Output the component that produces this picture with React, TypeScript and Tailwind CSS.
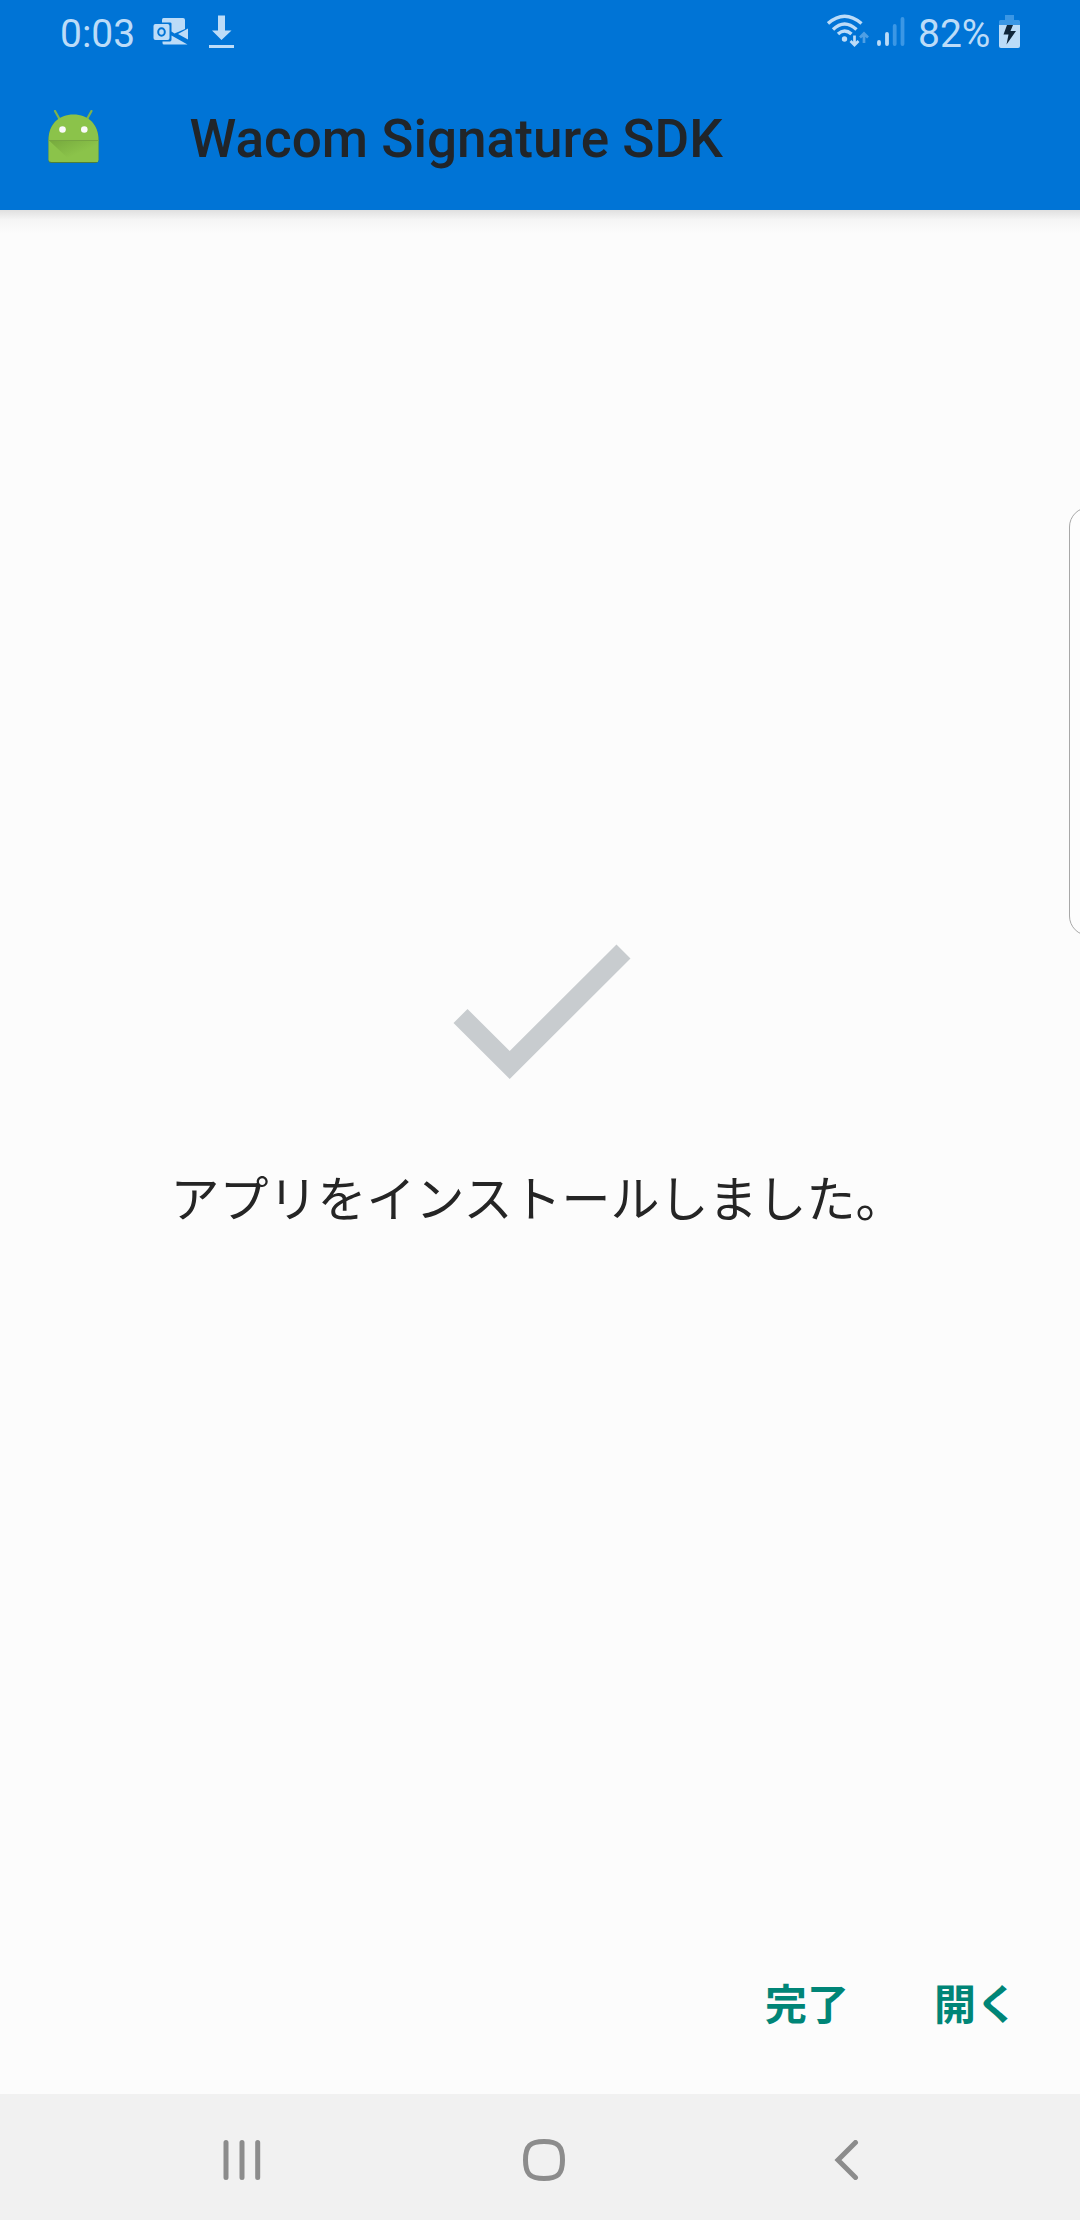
function MailIcon() {
  return (
    <svg width="36" height="28" viewBox="0 0 36 28" fill="#bcdcf8">
      <path d="M10.500 0H30Q32 0 32 2V11L21.500 15.500L18.500 13.500V5.500Q18.500 4.500 17 4.500H9V2Q9 0 10.500 0Z" />
      <path d="M35 10.500V21.500L25 16Z" />
      <path d="M9.500 23.500H17Q18.500 23.500 18.500 21.500V17.500L34.500 26.500H11Q9.500 26.500 9.500 25Z" />
      <rect x="0.500" y="6" width="16" height="16" rx="2" />
      <ellipse cx="8.500" cy="14" rx="3.300" ry="3.800" fill="none" stroke="#0074d6" strokeWidth="2" />
    </svg>
  );
}

function DownloadIcon() {
  return (
    <svg width="25" height="34" viewBox="0 0 25 34" fill="#bcdcf8">
      <path d="M9 0.500H16V15.500H22.500L12.500 25L3 15.500H9Z" />
      <rect y="30" width="25" height="3" />
    </svg>
  );
}

function WifiIcon() {
  return (
    <svg width="43" height="34" viewBox="0 0 43 34" fill="none" stroke="#bcdcf8" strokeWidth="3.400">
      <path d="M1 9.500Q17.500 -5 34.500 9.500" />
      <path d="M6 15.500Q17.500 4.500 29.500 15.500" />
      <path d="M11 20Q17.500 14 24.500 20" />
      <circle cx="17.500" cy="25" r="2.700" fill="#bcdcf8" stroke="none" />
      <path d="M27.500 21.500V31M23.500 27L27.500 31L31.500 27" strokeWidth="2.700" />
      <path d="M37 29V19.500M33 23.500L37 19.500L41 23.500" stroke="#4f9fe4" strokeWidth="2.700" />
    </svg>
  );
}

function SignalIcon() {
  return (
    <svg width="28" height="31" viewBox="0 0 28 31" strokeWidth="3.800" strokeLinecap="round">
      <path d="M2 26V28M10 18V28" stroke="#bcdcf8" />
      <path d="M17.700 10V28M25.500 3V28" stroke="#3b97e5" />
    </svg>
  );
}

function BatteryIcon() {
  return (
    <svg width="21" height="33" viewBox="0 0 21 33">
      <path d="M6 0H15V5H19.500Q21 5 21 6.500V11H0V6.500Q0 5 1.500 5H6Z" fill="#3b97e5" />
      <path d="M0 10H21V31Q21 33 19 33H2Q0 33 0 31Z" fill="#bcdcf8" />
      <path d="M8 10H14L11.500 16H17L7.500 29.500L9.500 19.500H4.500Z" fill="#10263b" />
    </svg>
  );
}

function RobotIcon() {
  return (
    <svg width="54" height="54" viewBox="0 0 54 54">
      <defs>
        <linearGradient id="robotShade" x1="0" y1="0" x2="1" y2="1">
          <stop offset="0" stopColor="#76a93d" />
          <stop offset="0.600" stopColor="#8bc34a" />
        </linearGradient>
      </defs>
      <path d="M8 1L13 10M44.500 1L39.500 10" stroke="#7fb34a" strokeWidth="2.200" strokeLinecap="round" />
      <path d="M1.500 50.500V30C1.500 14 12 5 26.500 5S51.500 14 51.500 30V50Q51.500 53 48.500 53H4.500Q1.500 53 1.500 50.500Z" fill="#4b7f3d" />
      <path d="M1.500 49.500V30C1.500 14 12 4.500 26.500 4.500S51.500 14 51.500 30V49.500Q51.500 52 48.500 52H4.500Q1.500 52 1.500 49.500Z" fill="#8bc34a" />
      <path d="M2 30.500H50L51 52H25Z" fill="url(#robotShade)" />
      <path d="M1.500 30.500H51.500" stroke="#76a541" />
      <circle cx="15.500" cy="19.500" r="3.300" fill="#fafafa" />
      <circle cx="37.300" cy="19.500" r="3.300" fill="#fafafa" />
    </svg>
  );
}

function StatusBar() {
  return (
    <div className="flex h-[66px] items-start pl-[60px] pr-[60px] text-[39px] leading-[46px] text-[#bcdcf8]">
      <span className="mt-[11px] w-[93px]">0:03</span>
      <div className="mt-[18px] w-[56px]"><MailIcon /></div>
      <div className="mt-[15px]"><DownloadIcon /></div>
      <div className="ml-auto mt-[14px]"><WifiIcon /></div>
      <div className="ml-[7px] mt-[16px]"><SignalIcon /></div>
      <span className="ml-[13px] mt-[11px] w-[81px] whitespace-nowrap">82%</span>
      <div className="mt-[15px]"><BatteryIcon /></div>
    </div>
  );
}

export default function App() {
  return (
    <div className="relative flex h-[2220px] w-[1080px] flex-col overflow-hidden bg-[#fcfcfc] font-['Roboto','Noto_Sans_CJK_JP',sans-serif]">
      <header className="h-[210px] shrink-0 bg-[#0074d6]">
        <StatusBar />
        <div className="flex h-[144px] items-start pl-[47px]">
          <div className="mt-[44px]"><RobotIcon /></div>
          <h1 className="ml-[88.500px] mt-[42px] whitespace-nowrap text-[53.100px] font-medium leading-[62px] text-[#212529]">Wacom Signature SDK</h1>
        </div>
      </header>
      <div className="h-[24px] shrink-0 bg-linear-to-b from-[#e0e0e0] via-[#f5f5f5] via-40% to-[#fcfcfc]" />

      <main className="flex flex-1 flex-col items-center pt-[710px]">
        <svg className="ml-[4px]" width="178" height="136" viewBox="0 0 178 136">
          <path d="M0.500 79L14.500 65L56.700 107L163.500 0.500L177.500 14.500L56.700 135Z" fill="#c8cccf" />
        </svg>
        <p className="mr-[5px] mt-[85px] whitespace-nowrap text-[49px] leading-[72px] text-[#252525]">アプリをインストールしました。</p>
        <div className="mb-[58px] mt-auto flex self-end pr-[62px] text-[42px] font-bold leading-[60px] text-[#008577]">
          <button className="mr-[85px]">完了</button>
          <button>開く</button>
        </div>
      </main>

      <div className="absolute left-[1069px] top-[507px] h-[429px] w-[40px] rounded-[20px] border border-[#a8a8a8] bg-[#fdfdfd]" />

      <nav className="flex h-[126px] shrink-0 items-center bg-[#f1f1f1] pl-[223px] pt-[6px]">
        <svg width="38" height="40" viewBox="0 0 38 40" stroke="#8c8c8c" strokeWidth="5" strokeLinecap="round">
          <path d="M3 2.500V37.500M19 2.500V37.500M34.700 2.500V37.500" />
        </svg>
        <svg className="ml-[262px]" width="42" height="42" viewBox="0 0 42 42" fill="none" stroke="#8c8c8c" strokeWidth="5">
          <path d="M21 2.500C35 2.500 39.500 7 39.500 21S35 39.500 21 39.500S2.500 35 2.500 21S7 2.500 21 2.500Z" />
        </svg>
        <svg className="ml-[269px]" width="25" height="40" viewBox="0 0 25 40" fill="none" stroke="#8c8c8c" strokeWidth="5" strokeLinecap="round">
          <path d="M21.500 2.500L4 20L21.500 37.500" />
        </svg>
      </nav>
    </div>
  );
}
